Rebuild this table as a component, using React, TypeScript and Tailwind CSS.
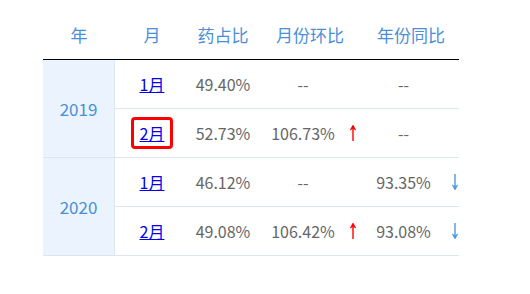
import React from "react"

const font = { fontFamily: '"Noto Sans CJK SC", "Microsoft YaHei", sans-serif' }

const Arrow = ({ up }: { up?: boolean }) => (
  <svg width="8" height="18" viewBox="0 0 8 18" className="shrink-0">
    {up ? (
      <g stroke="#ff0000" fill="#ff0000">
        <line x1="4" y1="2" x2="4" y2="17" strokeWidth="1.4" />
        <path d="M4 1 L1.2 6 L4 4.6 L6.8 6 Z" strokeWidth="0.6" />
      </g>
    ) : (
      <g stroke="#4a9be0" fill="#4a9be0">
        <line x1="4" y1="1" x2="4" y2="16" strokeWidth="1.4" />
        <path d="M4 17 L1.2 12 L4 13.4 L6.8 12 Z" strokeWidth="0.6" />
      </g>
    )}
  </svg>
)

type Row = {
  month: string
  ratio: string
  mom: string
  momUp?: boolean
  yoy: string
  yoyDown?: boolean
  active?: boolean
}

const groups: { year: string; rows: Row[] }[] = [
  {
    year: "2019",
    rows: [
      { month: "1月", ratio: "49.40%", mom: "--", yoy: "--" },
      { month: "2月", ratio: "52.73%", mom: "106.73%", momUp: true, yoy: "--", active: true },
    ],
  },
  {
    year: "2020",
    rows: [
      { month: "1月", ratio: "46.12%", mom: "--", yoy: "93.35%", yoyDown: true },
      { month: "2月", ratio: "49.08%", mom: "106.42%", momUp: true, yoy: "93.08%", yoyDown: true },
    ],
  },
]

const DataRow = ({ row, last }: { row: Row; last: boolean }) => (
  <div
    className={`flex items-center text-[16px] text-[#666666] ${
      last ? "h-[48px]" : "h-[49px] border-b border-[#dce6f2]"
    }`}
  >
    <div className="w-[74px] flex justify-center">
      {row.active ? (
        <span className="border-[3px] border-[#ff0000] rounded-[4px] px-[6px] h-[32px] flex items-center">
          <a href="#" className="text-[#0000ee] underline">{row.month}</a>
        </span>
      ) : (
        <a href="#" className="text-[#0000ee] underline">{row.month}</a>
      )}
    </div>
    <div className="w-[68px] text-center">{row.ratio}</div>
    <div className="w-[106px] flex items-center">
      <span className="w-[92px] text-center">{row.mom}</span>
      {row.momUp && <Arrow up />}
    </div>
    <div className="w-[96px] flex items-center">
      <span className="w-[81px] text-center">{row.yoy}</span>
      {row.yoyDown && <span className="ml-[7px] flex"><Arrow /></span>}
    </div>
  </div>
)

export default function App() {
  return (
    <div className="w-[530px] h-[294px] bg-white" style={font}>
      <div className="ml-[43px] pt-[10px] w-[416px]">
        <div className="flex items-center h-[50px] border-b border-black text-[17px] text-[#4a8fd6]">
          <div className="w-[72px] text-center">年</div>
          <div className="w-[74px] text-center">月</div>
          <div className="w-[68px] text-center">药占比</div>
          <div className="w-[106px] text-center">月份环比</div>
          <div className="w-[96px] text-center">年份同比</div>
        </div>
        {groups.map((g) => (
          <div key={g.year} className="flex border-b border-[#dce6f2]">
            <div className="w-[72px] bg-[#ebf4fe] border-r border-[#dce6f2] flex items-center justify-center text-[17px] text-[#4a8fd6]">
              {g.year}
            </div>
            <div className="flex-1 flex flex-col">
              {g.rows.map((r, i) => (
                <DataRow key={i} row={r} last={i === g.rows.length - 1} />
              ))}
            </div>
          </div>
        ))}
      </div>
    </div>
  )
}
